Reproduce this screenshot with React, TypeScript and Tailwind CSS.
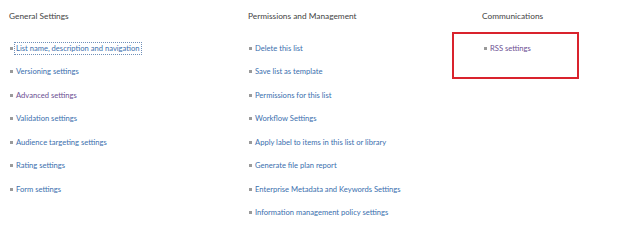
import React from 'react';

type Item = { label: string; visited?: boolean; focused?: boolean };

const columns: { title: string; items: Item[] }[] = [
  {
    title: 'General Settings',
    items: [
      { label: 'List name, description and navigation', focused: true },
      { label: 'Versioning settings' },
      { label: 'Advanced settings', visited: true },
      { label: 'Validation settings' },
      { label: 'Audience targeting settings' },
      { label: 'Rating settings' },
      { label: 'Form settings' },
    ],
  },
  {
    title: 'Permissions and Management',
    items: [
      { label: 'Delete this list' },
      { label: 'Save list as template' },
      { label: 'Permissions for this list' },
      { label: 'Workflow Settings' },
      { label: 'Apply label to items in this list or library' },
      { label: 'Generate file plan report' },
      { label: 'Enterprise Metadata and Keywords Settings' },
      { label: 'Information management policy settings' },
    ],
  },
];

function LinkRow({ item }: { item: Item }) {
  return (
    <li className="flex h-[23.5px] items-center">
      <span className="mr-[2px] ml-[1px] h-[3px] w-[3px] bg-[#9a9a9a]" />
      <a
        href="#"
        className={`px-[1px] leading-[11px] ${item.visited ? 'text-[#6c4f93]' : 'text-[#3b6fae]'} ${
          item.focused ? 'outline outline-1 outline-dotted outline-[#6f8fb8]' : ''
        }`}
      >
        {item.label}
      </a>
    </li>
  );
}

export default function App() {
  return (
    <div
      className="h-[236px] w-[624px] bg-white text-[7.6px]"
      style={{ fontFamily: 'Lato, "Open Sans", sans-serif' }}
    >
      <div className="grid grid-cols-[239px_234px_1fr] pt-[10px] pl-[9px]">
        {columns.map((col) => (
          <div key={col.title}>
            <h2 className="h-[12px] text-[8.3px] leading-[12px] text-[#444]">{col.title}</h2>
            <ul className="mt-[14.5px]">
              {col.items.map((item) => (
                <LinkRow key={item.label} item={item} />
              ))}
            </ul>
          </div>
        ))}

        {/* Communications */}
        <div>
          <h2 className="h-[12px] text-[8.3px] leading-[12px] text-[#444]">Communications</h2>
          <ul className="relative mt-[14.5px] ml-[1px]">
            <LinkRow item={{ label: 'RSS settings', visited: true }} />
            <div className="pointer-events-none absolute -top-[5px] -left-[31px] h-[47px] w-[127px] border-2 border-[#d9232d]" />
          </ul>
        </div>
      </div>
    </div>
  );
}
